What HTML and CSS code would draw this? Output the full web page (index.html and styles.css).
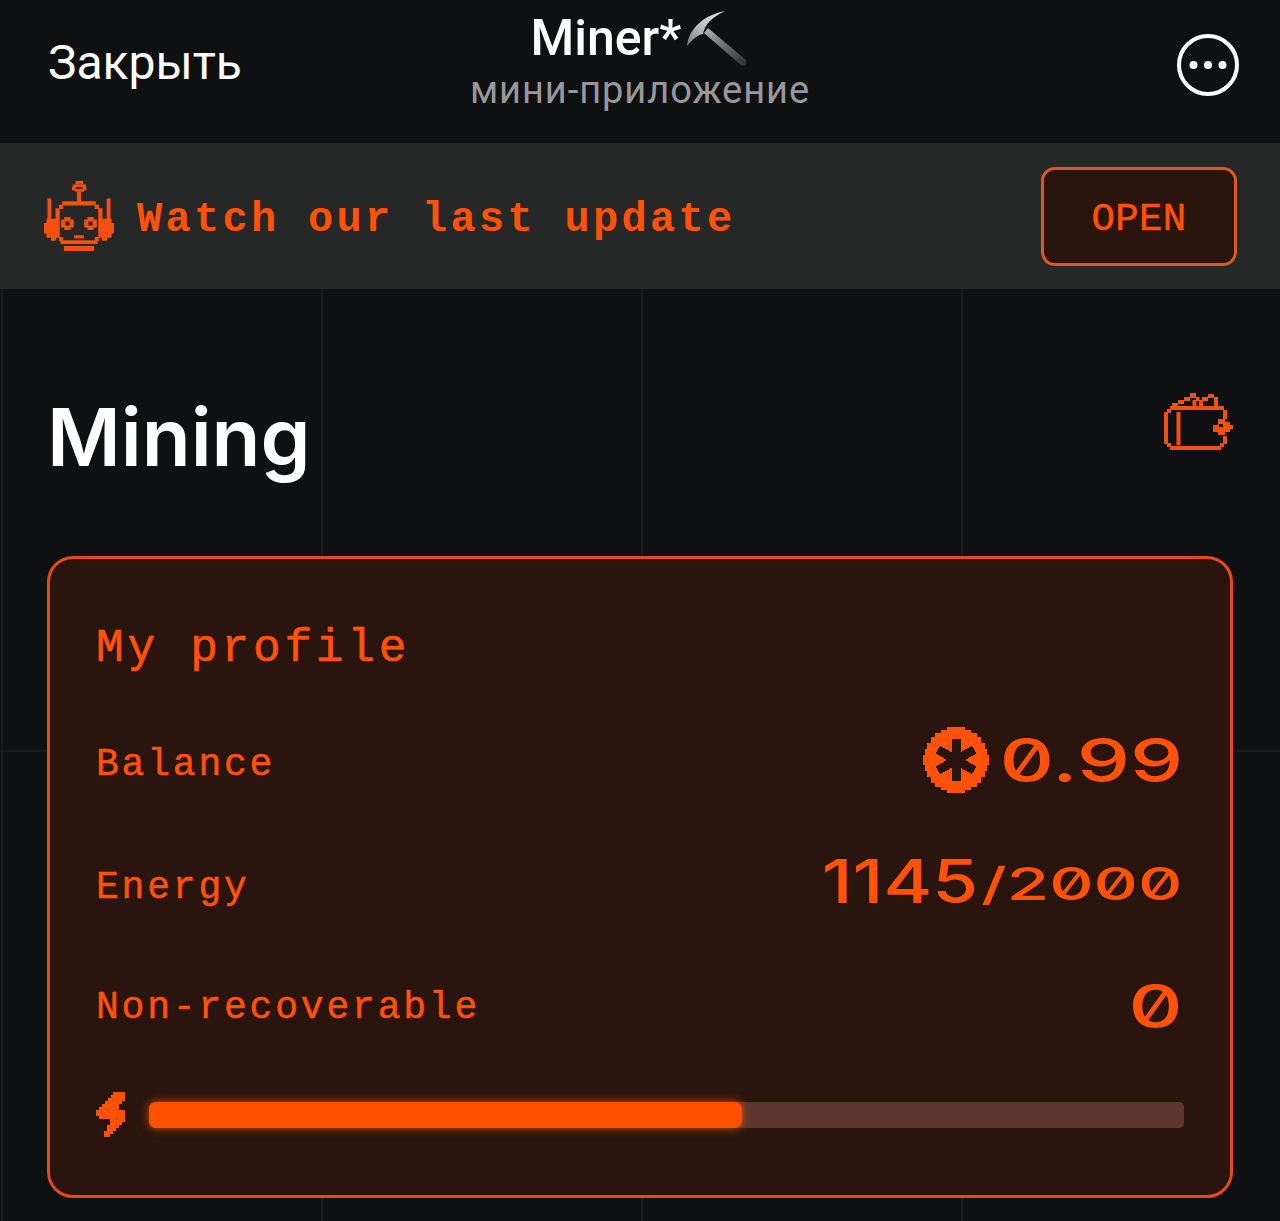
FILE: index.html
```html
<!DOCTYPE html>
<html>
<head>
  <title>Miner mini app</title>
  <link rel="stylesheet" href="styles.css">
</head>
<body>
  <!-- telegram top bar -->
  <header class="topbar">
    <div class="close">Закрыть</div>
    <div class="app">
      <div class="app-name">Miner*<svg class="pick" viewBox="0 0 64 60" width="64" height="60">
        <defs>
          <linearGradient id="handle" x1="0" y1="0" x2="1" y2="1">
            <stop offset="0" stop-color="#b5b5b5"/>
            <stop offset=".4" stop-color="#77787a"/>
            <stop offset="1" stop-color="#2a2b2d"/>
          </linearGradient>
          <linearGradient id="head" x1="0" y1="1" x2="1" y2="0">
            <stop offset="0" stop-color="#77787a"/>
            <stop offset=".5" stop-color="#c4c4c4"/>
            <stop offset="1" stop-color="#e4e4e4"/>
          </linearGradient>
        </defs>
        <path d="M19 23 L23 18 L61 50 Q63 56 57 56 Z" fill="url(#handle)"/>
        <path d="M2 36 C4 20 16 6 40 1 C26 8 20 14 18 24 C12 25 7 30 2 36 Z" fill="url(#head)"/>
      </svg></div>
      <div class="app-sub">мини-приложение</div>
    </div>
    <svg class="more" viewBox="0 0 64 64" width="64" height="64">
      <circle cx="32" cy="32" r="29" fill="none" stroke="#fff" stroke-width="4"/>
      <circle cx="17.500" cy="32" r="4" fill="#fff"/>
      <circle cx="32" cy="32" r="4" fill="#fff"/>
      <circle cx="46.500" cy="32" r="4" fill="#fff"/>
    </svg>
  </header>

  <!-- update banner -->
  <section class="banner">
    <div class="banner-left">
      <svg class="robot" viewBox="0 0 20 20" width="70" height="70">
        <path d="M9 0h2.200v.9H9z M8.200 1h3.800v.8H8.200z M8.800 2.300h2.600v.8H8.800z M8 1.700h1.100v1H8z M11 1.700h1.100v1H11z"/>
        <path d="M9.400 3h1.200v3h-1.200z"/>
        <path d="M5.200 5.800h9.600v1.200H5.200z M4.300 6.800h1.200v1.200H4.300z M14.500 6.800h1.200v1.200h-1.200z M3.300 7.800h1.200v8.400H3.300z M15.500 7.800h1.200v8.400h-1.200z"/>
        <path d="M4.300 16h1.200v1.200H4.300z M14.500 16h1.200v1.200h-1.200z M4.700 16.900h10.600v1.100H4.700z M5.700 18.600h8.600V20H5.700z"/>
        <path d="M1 5h1.100v6H1z M17.900 5H19v6h-1.100z"/>
        <path d="M.7 10.800h2.800v5.400H.7z M0 12h.8v3H0z M16.500 10.800h2.800v5.400h-2.800z M19.200 12h.8v3h-.8z M2 16.100h1.500v1H2z M16.500 16.100H18v1h-1.500z"/>
        <path fill-rule="evenodd" d="M5.800 10.300h1.800v.7h.9v2.300h-.9v.7H5.800v-.7h-.9V11h.9z M6.100 11.600v1.100h1.200v-1.100z"/>
        <path fill-rule="evenodd" d="M12.400 10.300h1.800v.7h.9v2.300h-.9v.7h-1.800v-.7h-.9V11h.9z M12.700 11.600v1.100h1.200v-1.100z"/>
        <path d="M8.600 15.500h2.800v.9H8.600z"/>
      </svg>
      <span class="banner-text">Watch our last update</span>
    </div>
    <div class="open-btn">OPEN</div>
  </section>

  <main class="main">
    <div class="title-row">
      <h1>Mining</h1>
      <svg class="wallet" viewBox="0 0 70 60" width="70" height="60">
        <path d="M7 14h51v4H7z M4 17h4v4H4z M1 20h4v32H1z M4 51h4v4H4z M7 54h51v4H7z M57 51h4v4h-4z M60 44h4v8h-4z M60 18h4v9h-4z M57 14h4v4h-4z"/>
        <path d="M13.500 20h4v33h-4z"/>
        <path d="M9 11h6v4H9z M15 8h6v4h-6z M21 5h6v4h-6z M27 1h6v5h-6z M33 5h3.500v4H33z M36 8h4v7h-4z M39 5h6v4h-6z M45 2h6v4h-6z M51 5h4v10h-4z M29.500 8h4v7h-4z"/>
        <path fill-rule="evenodd" d="M55 27h7v3h5v3h3v4h-3v3h-5v3h-7v-3h-5v-7h5z M56 32v3h4v-3z"/>
      </svg>
    </div>

    <div class="card">
      <h2>My profile</h2>
      <div class="row row-balance">
        <span class="label">Balance</span>
        <span class="value">
          <svg class="coin" viewBox="0 0 66 66" width="66" height="66">
            <path fill="#ff5208" shape-rendering="crispEdges" d="M24 0H42V3H48V6H54V10H58V16H62V22H64V28H66V38H64V44H62V50H58V56H54V60H48V63H42V66H24V63H18V60H12V56H8V50H4V44H2V38H0V28H2V22H4V16H8V10H12V6H18V3H24Z"/>
            <g stroke="#2a140e" stroke-width="9" shape-rendering="crispEdges">
              <path d="M33 12V54"/>
              <path d="M14.800 22.500L51.200 43.500"/>
              <path d="M51.200 22.500L14.800 43.500"/>
            </g>
          </svg>
          <span class="num num-lg">0.99</span>
        </span>
      </div>
      <div class="row row-energy">
        <span class="label">Energy</span>
        <span class="value">
          <span class="num num-lg">1145</span><span class="num num-sm">/2000</span>
        </span>
      </div>
      <div class="row row-nonrec">
        <span class="label">Non-recoverable</span>
        <span class="value"><span class="num num-lg num-zero">0</span></span>
      </div>
      <div class="energy">
        <svg class="bolt" viewBox="0 0 29 45" width="29" height="45" shape-rendering="crispEdges">
          <path d="M17 0H29V9H26V12H23V18H29V30H26V33H23V36H20V39H17V42H14V45H8V39H11V33H14V27H3V24H0V18H3V15H6V12H9V9H12V6H15V3H17Z"/>
        </svg>
        <div class="track"><div class="fill" style="width: 57.25%"></div></div>
      </div>
    </div>
  </main>
</body>
</html>
```

FILE: styles.css
```css
html, body {
  margin: 0;
  height: 1221px;
  overflow: hidden;
  background: #0f1012;
}

/* top bar */
.topbar {
  height: 143px;
  box-sizing: border-box;
  padding: 0 40px 14px;
  display: grid;
  grid-template-columns: 1fr auto 1fr;
  align-items: center;
  font-family: Roboto, sans-serif;
}

.close {
  color: #fff;
  font-size: 48px;
  line-height: 54px;
  margin: -4px 0 0 8px;
}

.app {
  text-align: center;
  margin-top: -4px;
}

.app-name {
  display: inline-flex;
  align-items: flex-start;
  height: 52px;
  margin-top: -2px;
  color: #fff;
  font-size: 50px;
  line-height: 50px;
  font-weight: 500;
}

.pick {
  margin: -3px 0 0 4px;
}

.app-sub {
  color: #98989c;
  font-size: 38px;
  line-height: 42px;
  letter-spacing: .95px;
  margin-top: 4px;
}

.more {
  justify-self: end;
}

/* banner */
.banner {
  height: 146px;
  box-sizing: border-box;
  padding: 0 43px 0 44px;
  background: #262828;
  display: flex;
  align-items: center;
  justify-content: space-between;
}

.banner-left {
  display: flex;
  align-items: center;
  gap: 23px;
}

.robot { fill: #f5500f; }

.banner-text {
  color: #ff5208;
  font: bold 42px "Liberation Mono", monospace;
  letter-spacing: 3.3px;
  white-space: pre;
  padding-top: 8px;
}

.open-btn {
  width: 196px;
  height: 99px;
  box-sizing: border-box;
  padding-top: 8px;
  border: 3px solid #e0561f;
  border-radius: 14px;
  background: #2a140e;
  color: #ff5208;
  font: 39px "Liberation Mono", monospace;
  letter-spacing: .3px;
  -webkit-text-stroke: .5px #ff5208;
  display: flex;
  align-items: center;
  justify-content: center;
}

/* main area with the faint grid */
.main {
  height: 932px;
  box-sizing: border-box;
  padding: 0 47px;
  background-image:
    linear-gradient(to right, #18191c 2px, transparent 2px),
    linear-gradient(to bottom, #18191c 2px, transparent 2px);
  background-size: 320px 100%, 100% 640px;
  background-position: 1px 0, 0 461px;
}

.title-row {
  height: 267px;
  display: flex;
  align-items: flex-start;
  justify-content: space-between;
}

h1 {
  margin: 100px 0 0;
  color: #fff;
  font: 600 80px/96px Inter, sans-serif;
}

.wallet {
  fill: #f2500f;
  margin-top: 103px;
}

/* profile card */
.card {
  height: 642px;
  box-sizing: border-box;
  border: 3px solid #e8481a;
  border-radius: 26px;
  background: #2a140e;
  padding: 0 47px 0 46px;
  color: #ff5208;
}

h2 {
  margin: 63px 0 0;
  font: normal 46px/54px "Liberation Mono", monospace;
  letter-spacing: 3.8px;
  -webkit-text-stroke: .6px #ff5208;
  white-space: pre;
}

.row {
  display: flex;
  align-items: center;
  justify-content: space-between;
}

.row-balance { margin-top: 54px; height: 70px; }
.row-energy { margin-top: 58px; height: 60px; }
.row-nonrec { margin-top: 60px; height: 60px; }

.label {
  font: 38px/50px "Liberation Mono", monospace;
  letter-spacing: 2.8px;
  -webkit-text-stroke: .5px #ff5208;
}

.value {
  display: flex;
  align-items: center;
}

.row-balance .value { margin-bottom: 10px; }
.row-energy .value { margin-bottom: 14px; }
.row-nonrec .value { margin-bottom: 4px; }

.num {
  display: inline-block;
  font-family: Inter, sans-serif;
  font-weight: 500;
  font-feature-settings: "zero" 1;
  transform-origin: right center;
}

.num-lg {
  font-size: 60px;
  line-height: 60px;
}

.num-sm {
  font-size: 45px;
  line-height: 60px;
  padding-top: 6px;
}

/* no square display face here, so the digits get stretched */
.row-balance .num { transform: scaleX(1.41); margin-left: 64px; }
.row-energy .num-lg { transform: scaleX(1.24); margin-right: 73px; }
.row-energy .num-sm { transform: scaleX(1.53); }
.row-nonrec .num { transform: scaleX(1.4); }

.energy {
  margin-top: 54px;
  margin-right: -1px;
  display: flex;
  align-items: center;
}

.bolt {
  fill: #ff5208;
  margin-right: 24px;
}

.track {
  flex: 1;
  height: 26px;
  border-radius: 5px;
  background: #5e362e;
}

.fill {
  height: 100%;
  border-radius: 7px;
  background: #ff5000;
  box-shadow: 0 0 10px rgba(255, 100, 0, .75);
}
```
